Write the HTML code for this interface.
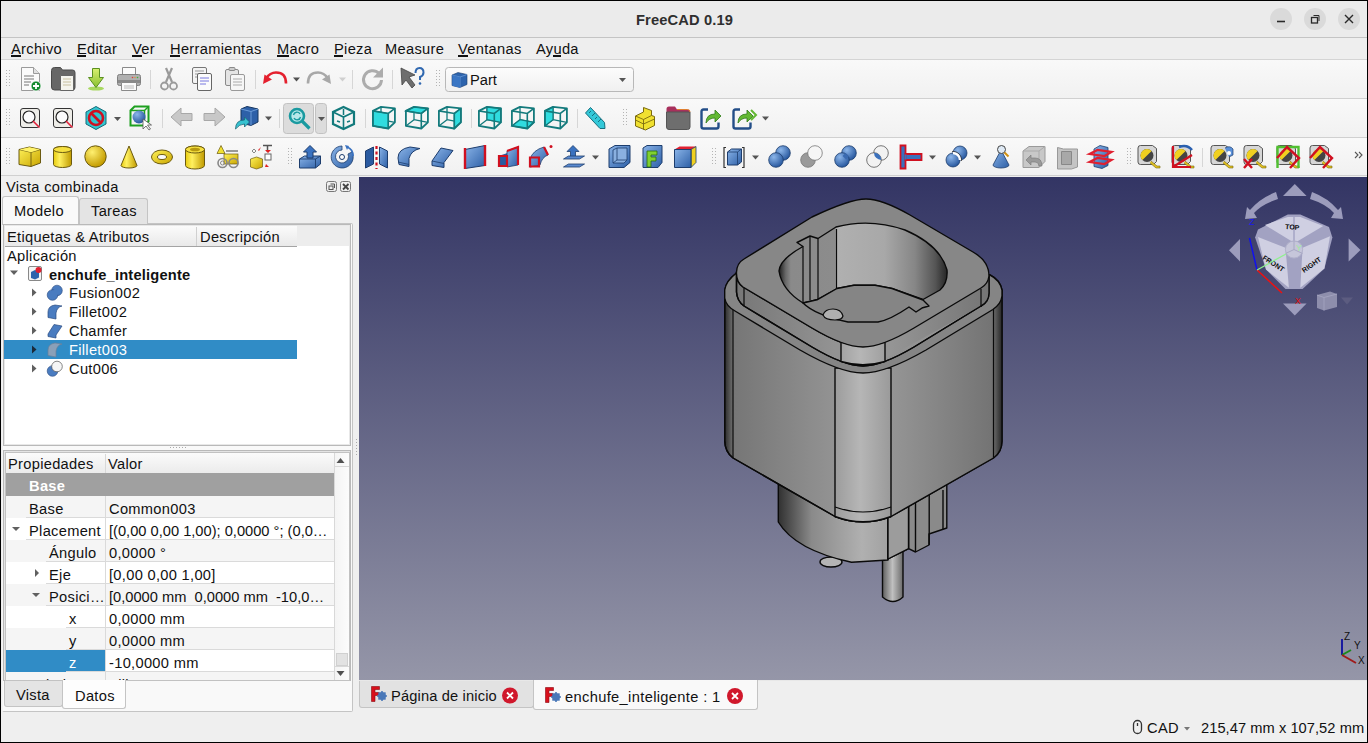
<!DOCTYPE html>
<html><head><meta charset="utf-8">
<style>
*{box-sizing:border-box;margin:0;padding:0}
html,body{width:1368px;height:743px;overflow:hidden;background:#efefef}
body{font-family:"Liberation Sans",sans-serif;font-size:14.67px;color:#111;position:relative}
.a{position:absolute}
.t{position:absolute;white-space:pre;line-height:15px;letter-spacing:0.3px}
.u{position:absolute;height:2px;background:#111}
svg{position:absolute;overflow:visible}

</style></head><body>
<div class="a" style="left:0;top:0;width:1368px;height:37px;background:#ebebeb"></div>
<div class="a" style="left:0;top:37px;width:1368px;height:1px;background:#c4c4c4"></div>
<div class="t" style="left:636px;top:13px;font-weight:bold;color:#2f2f2f;letter-spacing:0.15px">FreeCAD 0.19</div>
<div class="a" style="left:1270px;top:8px;width:22px;height:22px;border-radius:50%;background:#dadada"></div>
<div class="a" style="left:1304px;top:8px;width:22px;height:22px;border-radius:50%;background:#dadada"></div>
<div class="a" style="left:1338px;top:8px;width:22px;height:22px;border-radius:50%;background:#dadada"></div>
<svg style="left:0;top:0" width="1368" height="40">
 <path d="M1277 21.5h8" stroke="#2a2a2a" stroke-width="1.6"/>
 <rect x="1311.5" y="17.5" width="6" height="5.5" fill="none" stroke="#2a2a2a" stroke-width="1.3"/>
 <path d="M1313.5 15.5h5.5v5.5" fill="none" stroke="#2a2a2a" stroke-width="1"/>
 <path d="M1345 15l8 8M1353 15l-8 8" stroke="#2a2a2a" stroke-width="1.4"/>
</svg>
<div class="a" style="left:0;top:38px;width:1368px;height:21px;background:#eeeeee"></div>
<div class="a" style="left:0;top:59px;width:1368px;height:1px;background:#d4d4d4"></div>
<div style="letter-spacing:0.45px">
<div class="t" style="left:11px;top:42px">Archivo</div><div class="u" style="left:11px;top:55px;width:10px"></div>
<div class="t" style="left:77px;top:42px">Editar</div><div class="u" style="left:77px;top:55px;width:9px"></div>
<div class="t" style="left:132px;top:42px">Ver</div><div class="u" style="left:132px;top:55px;width:10px"></div>
<div class="t" style="left:170px;top:42px">Herramientas</div><div class="u" style="left:170px;top:55px;width:10px"></div>
<div class="t" style="left:277px;top:42px">Macro</div><div class="u" style="left:277px;top:55px;width:12px"></div>
<div class="t" style="left:334px;top:42px">Pieza</div><div class="u" style="left:334px;top:55px;width:9px"></div>
<div class="t" style="left:385px;top:42px">Measure</div>
<div class="t" style="left:458px;top:42px">Ventanas</div><div class="u" style="left:458px;top:55px;width:10px"></div>
<div class="t" style="left:536px;top:42px">Ayuda</div><div class="u" style="left:553px;top:55px;width:8px"></div>
</div>
<div class="a" style="left:0;top:60px;width:1368px;height:38px;background:linear-gradient(#f9f9f9,#f1f1f1)"></div>
<div class="a" style="left:0;top:98px;width:1368px;height:1px;background:#d0d0d0"></div>
<div class="a" style="left:0;top:99px;width:1368px;height:38px;background:linear-gradient(#f9f9f9,#f1f1f1)"></div>
<div class="a" style="left:0;top:137px;width:1368px;height:1px;background:#d0d0d0"></div>
<div class="a" style="left:0;top:138px;width:1368px;height:37px;background:linear-gradient(#f9f9f9,#f1f1f1)"></div>
<div class="a" style="left:0;top:175px;width:1368px;height:1px;background:#d0d0d0"></div>
<!-- borders -->
<div class="a" style="left:0;top:0;width:1368px;height:1px;background:#000;z-index:50"></div>
<div class="a" style="left:0;top:742px;width:1368px;height:1px;background:#000;z-index:50"></div>
<div class="a" style="left:0;top:0;width:1px;height:743px;background:#000;z-index:50"></div>
<div class="a" style="left:1367px;top:0;width:1px;height:743px;background:#000;z-index:50"></div>
<svg style="left:0;top:0;z-index:5" width="1368" height="180"><defs>
<linearGradient id="gy" x1="0" y1="0" x2="1" y2="1"><stop offset="0" stop-color="#fff35a"/><stop offset="1" stop-color="#c9a400"/></linearGradient>
<linearGradient id="gyh" x1="0" y1="0" x2="1" y2="0"><stop offset="0" stop-color="#e8cc10"/><stop offset="0.35" stop-color="#fff060"/><stop offset="1" stop-color="#c09a00"/></linearGradient>
<radialGradient id="gys" cx="0.35" cy="0.3" r="0.7"><stop offset="0" stop-color="#fff070"/><stop offset="1" stop-color="#c49c00"/></radialGradient>
<linearGradient id="gb" x1="0" y1="0" x2="1" y2="1"><stop offset="0" stop-color="#8ab4e8"/><stop offset="1" stop-color="#2d5fa6"/></linearGradient>
<radialGradient id="gbs" cx="0.35" cy="0.3" r="0.7"><stop offset="0" stop-color="#8cb6ea"/><stop offset="1" stop-color="#2a5aa0"/></radialGradient>
<linearGradient id="gg" x1="0" y1="0" x2="0" y2="1"><stop offset="0" stop-color="#d8f070"/><stop offset="1" stop-color="#88c030"/></linearGradient>
<linearGradient id="gcombo" x1="0" y1="0" x2="0" y2="1"><stop offset="0" stop-color="#fcfcfc"/><stop offset="1" stop-color="#f0f0f0"/></linearGradient></defs><rect x="6" y="70" width="1" height="1" fill="#b4b4b4"/><rect x="9" y="70" width="1" height="1" fill="#b4b4b4"/><rect x="6" y="73" width="1" height="1" fill="#b4b4b4"/><rect x="9" y="73" width="1" height="1" fill="#b4b4b4"/><rect x="6" y="76" width="1" height="1" fill="#b4b4b4"/><rect x="9" y="76" width="1" height="1" fill="#b4b4b4"/><rect x="6" y="79" width="1" height="1" fill="#b4b4b4"/><rect x="9" y="79" width="1" height="1" fill="#b4b4b4"/><rect x="6" y="82" width="1" height="1" fill="#b4b4b4"/><rect x="9" y="82" width="1" height="1" fill="#b4b4b4"/><rect x="6" y="85" width="1" height="1" fill="#b4b4b4"/><rect x="9" y="85" width="1" height="1" fill="#b4b4b4"/><g transform="translate(19,67)"><path d="M2.5 0.5h12l6 6v17h-18z" fill="#fafafa" stroke="#9a9a9a"/><path d="M14.5 0.5v6h6" fill="#e0e0e0" stroke="#9a9a9a"/><path d="M5 9h10M5 12h10M5 15h7M5 18h5" stroke="#777" stroke-width="1"/><circle cx="17" cy="19" r="5" fill="#138a2e" stroke="#fff" stroke-width="0.8"/><path d="M14 19h6M17 16v6" stroke="#fff" stroke-width="1.8"/></g><g transform="translate(51,67)"><path d="M0.5 3.5q0-3 3-3h6l2 2.5h10q2.5 0 2.5 2.5v15q0 2.5-2.5 2.5h-18q-3 0-3-3z" fill="#676767" stroke="#4a4a4a"/><path d="M9.5 8.5h13v15h-13z" fill="#f4f4ee" stroke="#666"/><path d="M12 12h8M12 15h8M12 18h8" stroke="#c8c0a0"/></g><g transform="translate(88,67)"><ellipse cx="8" cy="21.5" rx="8" ry="2" fill="#a8d860"/><path d="M4.5 1.5h7v9h4l-7.5 10l-7.5-10h4z" fill="url(#gg)" stroke="#5a9020"/></g><g transform="translate(117,67)"><path d="M5.5 0.5h13v7h-13z" fill="#fbfbfb" stroke="#8a8a8a"/><rect x="0.5" y="7.5" width="23" height="11" rx="2" fill="#b0b0b0" stroke="#808080"/><rect x="1" y="13" width="22" height="3" fill="#8a8a8a"/><path d="M4.5 15.5h15v8h-15z" fill="#fbfbfb" stroke="#8a8a8a"/><path d="M7 19h10M7 21h10" stroke="#bbb"/><circle cx="15.5" cy="10.5" r="0.8" fill="#e04040"/><circle cx="18" cy="10.5" r="0.8" fill="#e09040"/><circle cx="20.5" cy="10.5" r="0.8" fill="#40b040"/></g><rect x="150" y="70" width="1" height="19" fill="#d6d6d6"/><g transform="translate(160,67)"><path d="M6 1l6 14M12 1l-6 14" stroke="#9a9a9a" stroke-width="2.2"/><circle cx="4.5" cy="19" r="3.5" fill="none" stroke="#9a9a9a" stroke-width="1.8"/><circle cx="13.5" cy="19" r="3.5" fill="none" stroke="#9a9a9a" stroke-width="1.8"/></g><g transform="translate(192,67)"><rect x="0.5" y="0.5" width="14" height="16" rx="1.5" fill="#f4f4f4" stroke="#777"/><path d="M3 4h9M3 7h9M3 10h9" stroke="#999"/><rect x="5.5" y="6.5" width="14" height="17" rx="1.5" fill="#fbfbfb" stroke="#666"/><path d="M8 11h9M8 14h9M8 17h6" stroke="#7878e0"/></g><g transform="translate(225,67)"><rect x="0.5" y="2.5" width="13" height="16" rx="1.5" fill="#e4e4e4" stroke="#8a8a8a"/><rect x="4" y="0.5" width="6" height="3" rx="1" fill="#ccc" stroke="#8a8a8a"/><rect x="5.5" y="7.5" width="14" height="16" rx="1.5" fill="#f6f6f6" stroke="#999"/><path d="M8 12h9M8 15h9M8 18h9" stroke="#aaa"/></g><rect x="255" y="70" width="1" height="19" fill="#d6d6d6"/><g transform="translate(263,67)"><path d="M23 16.5q0-11-10-11q-6 0-10 6" fill="none" stroke="#e4202e" stroke-width="2.6"/><path d="M0 17l1.5-9.5l7.5 5z" fill="#e4202e"/></g><path d="M293 77.5h7l-3.5 4z" fill="#505050"/><g transform="translate(307,67)"><path d="M1 16.5q0-11 10-11q6 0 10 6" fill="none" stroke="#a8a8a8" stroke-width="2.6"/><path d="M24 17l-1.5-9.5l-7.5 5z" fill="#a8a8a8"/></g><path d="M339 77.5h7l-3.5 4z" fill="#cfcfcf"/><rect x="352" y="70" width="1" height="19" fill="#d6d6d6"/><g transform="translate(360,67)"><path d="M19 6.5a9 9 0 1 0 2.5 6.5" fill="none" stroke="#acacac" stroke-width="3"/><path d="M23 0.5v10h-10z" fill="#acacac"/></g><rect x="392" y="70" width="1" height="19" fill="#d6d6d6"/><g transform="translate(400,67)"><path d="M1 1l14 7l-6 2l6 8l-3 3l-6-8l-4 5z" fill="#6e6e6e" stroke="#444" stroke-width="0.8"/><path d="M15.5 6q0-5 4-5t4 4.5q0 3-3.5 4.5v3" fill="none" stroke="#3068b0" stroke-width="2"/><circle cx="20" cy="16.5" r="1.3" fill="#3068b0"/></g><rect x="436" y="70" width="1" height="1" fill="#b4b4b4"/><rect x="439" y="70" width="1" height="1" fill="#b4b4b4"/><rect x="436" y="73" width="1" height="1" fill="#b4b4b4"/><rect x="439" y="73" width="1" height="1" fill="#b4b4b4"/><rect x="436" y="76" width="1" height="1" fill="#b4b4b4"/><rect x="439" y="76" width="1" height="1" fill="#b4b4b4"/><rect x="436" y="79" width="1" height="1" fill="#b4b4b4"/><rect x="439" y="79" width="1" height="1" fill="#b4b4b4"/><rect x="436" y="82" width="1" height="1" fill="#b4b4b4"/><rect x="439" y="82" width="1" height="1" fill="#b4b4b4"/><rect x="436" y="85" width="1" height="1" fill="#b4b4b4"/><rect x="439" y="85" width="1" height="1" fill="#b4b4b4"/><rect x="445.5" y="67.5" width="188" height="24" rx="3" fill="url(#gcombo)" stroke="#b8b8b8"/><g transform="translate(451,72)"><path d="M1 3l6-2.5l9 2l0 10l-7 3l-8-2z" fill="#2d64ad" stroke="#1d3d6d" stroke-width="0.6"/><path d="M1 3l8 2l7-2.5M9 5v11" stroke="#6a9ad8" stroke-width="0.8" fill="none"/><path d="M1.3 3.3l7.7 1.9v10.5l-7.7-2z" fill="#3a76c4"/></g><text x="470" y="85" font-size="14.67" fill="#111" style="font-family:Liberation Sans">Part</text><path d="M619 78h7l-3.5 4z" fill="#555"/><rect x="6" y="109" width="1" height="1" fill="#b4b4b4"/><rect x="9" y="109" width="1" height="1" fill="#b4b4b4"/><rect x="6" y="112" width="1" height="1" fill="#b4b4b4"/><rect x="9" y="112" width="1" height="1" fill="#b4b4b4"/><rect x="6" y="115" width="1" height="1" fill="#b4b4b4"/><rect x="9" y="115" width="1" height="1" fill="#b4b4b4"/><rect x="6" y="118" width="1" height="1" fill="#b4b4b4"/><rect x="9" y="118" width="1" height="1" fill="#b4b4b4"/><rect x="6" y="121" width="1" height="1" fill="#b4b4b4"/><rect x="9" y="121" width="1" height="1" fill="#b4b4b4"/><rect x="6" y="124" width="1" height="1" fill="#b4b4b4"/><rect x="9" y="124" width="1" height="1" fill="#b4b4b4"/><g transform="translate(20,108)"><rect x="0.5" y="0.5" width="19" height="19" rx="2.5" fill="#eeede8" stroke="#333" stroke-width="1"/><circle cx="9" cy="9" r="6" fill="#fbfbfb" stroke="#222" stroke-width="1.2"/><path d="M13 13l6.5 6.5" stroke="#e0203a" stroke-width="1.6"/></g><g transform="translate(53,108)"><rect x="0.5" y="0.5" width="19" height="19" rx="2.5" fill="#eeede8" stroke="#333" stroke-width="1"/><circle cx="9" cy="9" r="6" fill="#fbfbfb" stroke="#222" stroke-width="1.2"/><path d="M13 13l6.5 6.5" stroke="#e0203a" stroke-width="1.6"/></g><g transform="translate(85,106)"><path d="M11 0.5l10 5.5v12l-10 5.5l-10-5.5v-12z" fill="#31c6d0" stroke="#156a78"/><circle cx="11" cy="12" r="7" fill="none" stroke="#d01020" stroke-width="2.6"/><path d="M6 7l10 10" stroke="#d01020" stroke-width="2.6"/></g><path d="M114 117h7l-3.5 4z" fill="#555"/><g transform="translate(129,106)"><path d="M1.5 4.5l4-4h14v15l-4 4h-14z" fill="none" stroke="#1ea020" stroke-width="2"/><path d="M1.5 4.5h14v15M15.5 4.5l4-4" fill="none" stroke="#1ea020" stroke-width="1.5"/><circle cx="10" cy="11" r="6.5" fill="url(#gbs)"/><path d="M14 13l0 10l3-3l3 4l1.5-1l-3-4h4z" fill="#fff" stroke="#555" stroke-width="0.8"/></g><rect x="162" y="109" width="1" height="19" fill="#d6d6d6"/><g transform="translate(170,106)"><path d="M1 11l10-9v5.5h11v7h-11v5.5z" fill="#c8c8c8" stroke="#a8a8a8"/></g><g transform="translate(203,106)"><path d="M22 11l-10-9v5.5h-11v7h11v5.5z" fill="#c8c8c8" stroke="#a8a8a8"/></g><g transform="translate(235,106)"><path d="M6 3l6-2.5l11 2.5v13l-7 3.5l-10-2.5z" fill="#2d60a8" stroke="#17365f"/><path d="M6 3l10 2.5l7-2.5M16 5.5v14" fill="none" stroke="#6b9bd8"/><path d="M0.5 23q0-9 9-9v-3l5 5l-5 5v-3q-5 0-9 5z" fill="#36c2d0" stroke="#1a6a7a" stroke-width="0.8"/></g><path d="M265 116.5h7l-3.5 4z" fill="#555"/><rect x="279" y="109" width="1" height="19" fill="#d6d6d6"/><rect x="283.5" y="103.5" width="30" height="30" rx="3" fill="#dcdcdc" stroke="#c2c2c2"/><rect x="315.5" y="103.5" width="11" height="30" rx="3" fill="#dcdcdc" stroke="#c2c2c2"/><g transform="translate(288,107)"><circle cx="9" cy="9" r="7" fill="#b8e8ea" stroke="#1a9aa0" stroke-width="2.6"/><path d="M14 14l7.5 7.5" stroke="#1a9aa0" stroke-width="3.2"/><path d="M5.5 8a3.5 3.5 0 0 1 6.5-1M12.5 10a3.5 3.5 0 0 1-6.5 1" fill="none" stroke="#1a9aa0" stroke-width="1.4"/></g><path d="M318 117h7l-3.5 4z" fill="#555"/><g transform="translate(332,106)"><path d="M11.5 1l10.5 5v12l-10.5 5l-10.5-5v-12z" fill="none" stroke="#137a7c" stroke-width="2.2"/><path d="M1 6l10.5 5l10.5-5M11.5 11v12" fill="none" stroke="#137a7c" stroke-width="1.6"/><path d="M11.5 3v6M5 15l3 1M15 16l3-1" stroke="#137a7c" stroke-width="1.5"/></g><rect x="365" y="109" width="1" height="19" fill="#d6d6d6"/><g transform="translate(370,104)"><path d="M11 2.9V15.7M11 15.7L24.9 18.3M11 15.7L2.9 21.9" stroke="#137a7c" stroke-width="1.3" fill="none"/><polygon points="2.9,6.9 18.3,9.5 18.3,24.5 2.9,21.9" fill="#30dcdf" stroke="#137a7c" stroke-width="1.2"/><polygon points="2.9,6.9 11,2.9 24.9,4.4 24.9,18.3 18.3,24.5 2.9,21.9" fill="none" stroke="#137a7c" stroke-width="1.8" stroke-linejoin="round"/><path d="M2.9 6.9L18.3 9.5L24.9 4.4M18.3 9.5V24.5" stroke="#137a7c" stroke-width="1.6" fill="none"/></g><g transform="translate(403,104)"><path d="M11 2.9V15.7M11 15.7L24.9 18.3M11 15.7L2.9 21.9" stroke="#137a7c" stroke-width="1.3" fill="none"/><polygon points="2.9,6.9 11,2.9 24.9,4.4 18.3,9.5" fill="#30dcdf" stroke="#137a7c" stroke-width="1.2"/><polygon points="2.9,6.9 11,2.9 24.9,4.4 24.9,18.3 18.3,24.5 2.9,21.9" fill="none" stroke="#137a7c" stroke-width="1.8" stroke-linejoin="round"/><path d="M2.9 6.9L18.3 9.5L24.9 4.4M18.3 9.5V24.5" stroke="#137a7c" stroke-width="1.6" fill="none"/></g><g transform="translate(436,104)"><path d="M11 2.9V15.7M11 15.7L24.9 18.3M11 15.7L2.9 21.9" stroke="#137a7c" stroke-width="1.3" fill="none"/><polygon points="18.3,9.5 24.9,4.4 24.9,18.3 18.3,24.5" fill="#30dcdf" stroke="#137a7c" stroke-width="1.2"/><polygon points="2.9,6.9 11,2.9 24.9,4.4 24.9,18.3 18.3,24.5 2.9,21.9" fill="none" stroke="#137a7c" stroke-width="1.8" stroke-linejoin="round"/><path d="M2.9 6.9L18.3 9.5L24.9 4.4M18.3 9.5V24.5" stroke="#137a7c" stroke-width="1.6" fill="none"/></g><rect x="471" y="109" width="1" height="19" fill="#d6d6d6"/><g transform="translate(476,104)"><path d="M11 2.9V15.7M11 15.7L24.9 18.3M11 15.7L2.9 21.9" stroke="#137a7c" stroke-width="1.3" fill="none"/><polygon points="11,2.9 24.9,4.4 24.9,18.3 11,15.7" fill="#30dcdf" stroke="#137a7c" stroke-width="1.2"/><polygon points="2.9,6.9 11,2.9 24.9,4.4 24.9,18.3 18.3,24.5 2.9,21.9" fill="none" stroke="#137a7c" stroke-width="1.8" stroke-linejoin="round"/><path d="M2.9 6.9L18.3 9.5L24.9 4.4M18.3 9.5V24.5" stroke="#137a7c" stroke-width="1.6" fill="none"/></g><g transform="translate(509,104)"><path d="M11 2.9V15.7M11 15.7L24.9 18.3M11 15.7L2.9 21.9" stroke="#137a7c" stroke-width="1.3" fill="none"/><polygon points="2.9,21.9 11,15.7 24.9,18.3 18.3,24.5" fill="#30dcdf" stroke="#137a7c" stroke-width="1.2"/><polygon points="2.9,6.9 11,2.9 24.9,4.4 24.9,18.3 18.3,24.5 2.9,21.9" fill="none" stroke="#137a7c" stroke-width="1.8" stroke-linejoin="round"/><path d="M2.9 6.9L18.3 9.5L24.9 4.4M18.3 9.5V24.5" stroke="#137a7c" stroke-width="1.6" fill="none"/></g><g transform="translate(542,104)"><path d="M11 2.9V15.7M11 15.7L24.9 18.3M11 15.7L2.9 21.9" stroke="#137a7c" stroke-width="1.3" fill="none"/><polygon points="2.9,6.9 11,2.9 11,15.7 2.9,21.9" fill="#30dcdf" stroke="#137a7c" stroke-width="1.2"/><polygon points="2.9,6.9 11,2.9 24.9,4.4 24.9,18.3 18.3,24.5 2.9,21.9" fill="none" stroke="#137a7c" stroke-width="1.8" stroke-linejoin="round"/><path d="M2.9 6.9L18.3 9.5L24.9 4.4M18.3 9.5V24.5" stroke="#137a7c" stroke-width="1.6" fill="none"/></g><rect x="577" y="109" width="1" height="19" fill="#d6d6d6"/><g transform="translate(585,107)"><path d="M0.5 6l5-5.5l14 15l0.5 6l-5 0z" fill="#33c8d8" stroke="#167080"/><path d="M4 6l2-2M7 9l3-3M10 12l2-2M13 15l3-3" stroke="#167080"/></g><rect x="623" y="109" width="1" height="1" fill="#b4b4b4"/><rect x="626" y="109" width="1" height="1" fill="#b4b4b4"/><rect x="623" y="112" width="1" height="1" fill="#b4b4b4"/><rect x="626" y="112" width="1" height="1" fill="#b4b4b4"/><rect x="623" y="115" width="1" height="1" fill="#b4b4b4"/><rect x="626" y="115" width="1" height="1" fill="#b4b4b4"/><rect x="623" y="118" width="1" height="1" fill="#b4b4b4"/><rect x="626" y="118" width="1" height="1" fill="#b4b4b4"/><rect x="623" y="121" width="1" height="1" fill="#b4b4b4"/><rect x="626" y="121" width="1" height="1" fill="#b4b4b4"/><rect x="623" y="124" width="1" height="1" fill="#b4b4b4"/><rect x="626" y="124" width="1" height="1" fill="#b4b4b4"/><g transform="translate(635,107)"><path d="M0.5 9l8-4v-4.5l8 3v5l3 1v9l-9 4.5l-10-4z" fill="#f0e030" stroke="#7a6a10"/><path d="M0.5 9l8 3.5l8-4M8.5 12.5v10M0.5 13l8 4l11-5" fill="none" stroke="#7a6a10" stroke-width="0.9"/></g><g transform="translate(666,106)"><path d="M0.5 3q0-2.5 2.5-2.5h6l2 3h10.5q2.5 0 2.5 2.5v2h-23.5z" fill="#a8305c"/><path d="M0.5 6h23.5v15q0 2.5-2.5 2.5h-18.5q-2.5 0-2.5-2.5z" fill="#6e6e6e" stroke="#555"/><path d="M11 3.5h10.5q2.5 0 2.5 2.5" stroke="#e08030" fill="none"/></g><g transform="translate(701,107)"><path d="M7 2.5h-4.5q-2 0-2 2v15q0 2 2 2h13q2 0 2-2v-4" fill="none" stroke="#234e88" stroke-width="2.4"/><path d="M5 16q0-9 9-9v-4l6 6l-6 6v-4q-6 0-9 5z" fill="#62b832" stroke="#2e7a18" stroke-width="0.8"/></g><g transform="translate(733,107)"><path d="M7 2.5h-4.5q-2 0-2 2v15q0 2 2 2h13q2 0 2-2v-4" fill="none" stroke="#234e88" stroke-width="2.4"/><path d="M5 16q0-9 9-9v-4l6 6l-6 6v-4q-6 0-9 5z" fill="#62b832" stroke="#2e7a18" stroke-width="0.8"/><path d="M18 3l5 5l-5 5" fill="none" stroke="#62b832" stroke-width="2"/></g><path d="M762 116.5h7l-3.5 4z" fill="#555"/><rect x="6" y="148" width="1" height="1" fill="#b4b4b4"/><rect x="9" y="148" width="1" height="1" fill="#b4b4b4"/><rect x="6" y="151" width="1" height="1" fill="#b4b4b4"/><rect x="9" y="151" width="1" height="1" fill="#b4b4b4"/><rect x="6" y="154" width="1" height="1" fill="#b4b4b4"/><rect x="9" y="154" width="1" height="1" fill="#b4b4b4"/><rect x="6" y="157" width="1" height="1" fill="#b4b4b4"/><rect x="9" y="157" width="1" height="1" fill="#b4b4b4"/><rect x="6" y="160" width="1" height="1" fill="#b4b4b4"/><rect x="9" y="160" width="1" height="1" fill="#b4b4b4"/><rect x="6" y="163" width="1" height="1" fill="#b4b4b4"/><rect x="9" y="163" width="1" height="1" fill="#b4b4b4"/><g transform="translate(18,146)"><path d="M1 3.5l10.5-2.5l11 2.5v13.5l-9.5 3.5l-12-2z" fill="url(#gy)" stroke="#6b5a10"/><path d="M1 3.5l12 2.8l9.5-2.8M13 6.3v14" fill="none" stroke="#6b5a10" stroke-width="0.9"/><path d="M1.5 3.6l10-2.3l10.5 2.3l-9 2.6z" fill="#fff36a"/></g><g transform="translate(53,146)"><path d="M0.5 3.5a9 3 0 0 1 18 0v15a9 3 0 0 1-18 0z" fill="url(#gyh)" stroke="#6b5a10"/><ellipse cx="9.5" cy="3.5" rx="9" ry="3" fill="#f6e040" stroke="#6b5a10"/></g><g transform="translate(84,145)"><circle cx="11.5" cy="11.5" r="10.7" fill="url(#gys)" stroke="#6b5a10"/></g><g transform="translate(121,145)"><path d="M8 1l8 19.5a8 2.5 0 0 1-16 0z" fill="url(#gyh)" stroke="#6b5a10"/></g><g transform="translate(151,149)"><ellipse cx="11" cy="8" rx="10.5" ry="7" fill="url(#gy)" stroke="#6b5a10"/><ellipse cx="11" cy="8" rx="4.5" ry="2.5" fill="#fbfbfb" stroke="#6b5a10"/></g><g transform="translate(185,145)"><path d="M0.5 4.5a9.5 3.5 0 0 1 19 0v16a9.5 3.5 0 0 1-19 0z" fill="url(#gyh)" stroke="#6b5a10"/><ellipse cx="10" cy="4.5" rx="9.5" ry="3.5" fill="#f6e040" stroke="#6b5a10"/><ellipse cx="10" cy="4.5" rx="5" ry="1.8" fill="#b89a10"/></g><g transform="translate(217,145)"><path d="M4 0.5l4 8h-8z" fill="#f0e030" stroke="#6b5a10" stroke-width="0.7"/><path d="M9 6h12" stroke="#999" stroke-width="2"/><rect x="7" y="9" width="14" height="10" fill="url(#gy)" stroke="#6b5a10" stroke-width="0.7"/><circle cx="5.5" cy="18" r="4.5" fill="none" stroke="#888" stroke-width="1.6"/><circle cx="5.5" cy="18" r="2" fill="none" stroke="#888" stroke-width="1"/><circle cx="16.5" cy="18" r="4.5" fill="none" stroke="#888" stroke-width="1.6"/></g><g transform="translate(250,145)"><path d="M0.5 14l6-2l6 2v8l-6 2l-6-2z" fill="url(#gy)" stroke="#6b5a10" stroke-width="0.7"/><path d="M13 0.5h9M17.5 1v6" stroke="#555" stroke-width="1.5"/><rect x="15" y="9" width="6" height="6" fill="#fff" stroke="#666"/><path d="M15 5l3 3l3-3z M11 2l-3 3l1 1z M16 19l3 3l-4 0z" fill="#e02020"/><path d="M2 6l2-2l2 2l-2 2z" fill="none" stroke="#888"/></g><rect x="288" y="148" width="1" height="1" fill="#b4b4b4"/><rect x="291" y="148" width="1" height="1" fill="#b4b4b4"/><rect x="288" y="151" width="1" height="1" fill="#b4b4b4"/><rect x="291" y="151" width="1" height="1" fill="#b4b4b4"/><rect x="288" y="154" width="1" height="1" fill="#b4b4b4"/><rect x="291" y="154" width="1" height="1" fill="#b4b4b4"/><rect x="288" y="157" width="1" height="1" fill="#b4b4b4"/><rect x="291" y="157" width="1" height="1" fill="#b4b4b4"/><rect x="288" y="160" width="1" height="1" fill="#b4b4b4"/><rect x="291" y="160" width="1" height="1" fill="#b4b4b4"/><rect x="288" y="163" width="1" height="1" fill="#b4b4b4"/><rect x="291" y="163" width="1" height="1" fill="#b4b4b4"/><g transform="translate(299,145)"><path d="M0.5 14l5-3h16v8l-5 4h-16z" fill="url(#gb)" stroke="#1d3d6d"/><path d="M0.5 14h16v9M16.5 14l5-3" fill="none" stroke="#1d3d6d" stroke-width="0.9"/><path d="M11 0.5l6.5 6.5h-3.5v6h-6v-6h-3.5z" fill="#3a72c0" stroke="#1d3d6d"/></g><g transform="translate(331,145)"><path d="M11 1a11 11 0 1 0 10 6l-4 2a6.5 6.5 0 1 1-6-4z" fill="url(#gb)" stroke="#1d3d6d" stroke-width="0.8"/><circle cx="11" cy="12" r="2.5" fill="#fff" stroke="#1d3d6d"/><path d="M16 2q6 2 6 9" fill="none" stroke="#3a72c0" stroke-width="1.8"/><path d="M14 0l4 1l-2 4z" fill="#3a72c0"/></g><g transform="translate(365,146)"><path d="M0.5 5l8-4v17l-8 4z" fill="#2a5aa0" stroke="#1d3d6d"/><path d="M14.5 1l8 4v17l-8-4z" fill="url(#gb)" stroke="#1d3d6d"/><path d="M11.5 0v23" stroke="#d01020" stroke-width="2.2" stroke-dasharray="3 2.5"/></g><g transform="translate(397,146)"><path d="M1 12q0-9 12-11l10 1.5q-9 2-11 10v8l-10-2z" fill="url(#gb)" stroke="#1d3d6d"/><path d="M1 16l11 2.5" stroke="#1d3d6d" stroke-width="0.8"/></g><g transform="translate(431,146)"><path d="M1 15l9-13l12 2.5l-9 12v5l-12-2z" fill="url(#gb)" stroke="#1d3d6d"/><path d="M1 15l12 2.5" stroke="#1d3d6d" stroke-width="0.8"/></g><g transform="translate(463,145)"><path d="M2 4.5l20-4v20l-20 3z" fill="url(#gb)" stroke="#1d3d6d"/><path d="M2 3v21M22 0v21" stroke="#d01020" stroke-width="2.4"/></g><g transform="translate(498,146)"><path d="M0.5 10l9-3v13l-9-1z" fill="#2a5aa0"/><path d="M9 5l11-4v18l-11 2z" fill="url(#gb)" stroke="#1d3d6d" stroke-width="0.8"/><path d="M1 10h8v10h-8z" fill="none" stroke="#d01020" stroke-width="2.2"/><path d="M9 5l11-4v18" fill="none" stroke="#d01020" stroke-width="2.2"/></g><g transform="translate(529,145)"><path d="M1 14q3-9 14-12l4 8q-6 2-8 10l-10 2z" fill="url(#gb)" stroke="#1d3d6d" stroke-width="0.8"/><path d="M1 12.5h9v9h-9z" fill="none" stroke="#d01020" stroke-width="2.2"/><path d="M15 2l4 8" stroke="#d01020" stroke-width="2.2"/><circle cx="22" cy="1.5" r="1.5" fill="#d01020"/></g><g transform="translate(563,145)"><path d="M10 0.5l6 6h-3.5v5h-5v-5h-3.5z" fill="#3a72c0" stroke="#1d3d6d" stroke-width="0.8"/><path d="M0.5 14l5-3h16l-5 3z" fill="#5a8ad0" stroke="#1d3d6d" stroke-width="0.8"/><path d="M0.5 22l5-3h16l-5 3z" fill="#5a8ad0" stroke="#1d3d6d" stroke-width="0.8"/></g><path d="M592 155.5h7l-3.5 4z" fill="#555"/><g transform="translate(608,145)"><path d="M1 4l6-3.5h15v17l-6 5h-15z" fill="url(#gb)" stroke="#1d3d6d"/><path d="M5 5l4-2h10v12l-3 3h-11z" fill="#8ab0e0" stroke="#1d3d6d" stroke-width="0.8"/><path d="M9 3v12h10M9 15l-4 3" fill="none" stroke="#1d3d6d" stroke-width="0.8"/></g><g transform="translate(642,145)"><path d="M1 3l4-2.5h15v17l-4 5h-15z" fill="url(#gb)" stroke="#1d3d6d"/><path d="M5 6h10v4h-6v2h5v4h-5v6h-4z" fill="#80d030" stroke="#2a6a10" stroke-width="0.8"/></g><g transform="translate(674,146)"><path d="M0.5 3.5l5-3h16.5l-5 3z" fill="#e02030"/><path d="M17 3.5l5-3v16l-5 5z" fill="#f0d020" stroke="#1d3d6d" stroke-width="0.8"/><path d="M0.5 3.5h16.5v18h-16.5z" fill="url(#gb)" stroke="#1d3d6d"/></g><rect x="712" y="148" width="1" height="1" fill="#b4b4b4"/><rect x="715" y="148" width="1" height="1" fill="#b4b4b4"/><rect x="712" y="151" width="1" height="1" fill="#b4b4b4"/><rect x="715" y="151" width="1" height="1" fill="#b4b4b4"/><rect x="712" y="154" width="1" height="1" fill="#b4b4b4"/><rect x="715" y="154" width="1" height="1" fill="#b4b4b4"/><rect x="712" y="157" width="1" height="1" fill="#b4b4b4"/><rect x="715" y="157" width="1" height="1" fill="#b4b4b4"/><rect x="712" y="160" width="1" height="1" fill="#b4b4b4"/><rect x="715" y="160" width="1" height="1" fill="#b4b4b4"/><rect x="712" y="163" width="1" height="1" fill="#b4b4b4"/><rect x="715" y="163" width="1" height="1" fill="#b4b4b4"/><g transform="translate(723,145)"><path d="M3 2.5h-2v20h2M19 2.5h2v20h-2" fill="none" stroke="#333" stroke-width="1.2"/><path d="M4.5 7l4-3h10v13l-4 3h-10z" fill="url(#gb)" stroke="#1d3d6d"/><path d="M4.5 7h10v13M14.5 7l4-3" fill="none" stroke="#1d3d6d" stroke-width="0.8"/></g><path d="M752 155.5h7l-3.5 4z" fill="#555"/><g transform="translate(768,145)"><circle cx="15" cy="8" r="7.3" fill="url(#gbs)" stroke="#1d3d6d" stroke-width="0.8"/><circle cx="8" cy="15" r="7.3" fill="url(#gbs)" stroke="#1d3d6d" stroke-width="0.8"/></g><g transform="translate(800,145)"><circle cx="8" cy="15" r="7.3" fill="#9a9a9a" stroke="#777" stroke-width="0.8"/><circle cx="15" cy="8" r="7.3" fill="#f6f6f6" stroke="#777" stroke-width="0.8"/></g><g transform="translate(834,145)"><circle cx="15" cy="8" r="7.3" fill="url(#gbs)" stroke="#1d3d6d" stroke-width="0.8"/><circle cx="8" cy="15" r="7.3" fill="url(#gbs)" stroke="#1d3d6d" stroke-width="0.8"/><path d="M10 9.5l3.5 3.5" stroke="#3a6ab0" stroke-width="4"/></g><g transform="translate(866,145)"><circle cx="15" cy="8" r="7.3" fill="#f2f2f2" stroke="#555" stroke-width="0.8"/><circle cx="8" cy="15" r="7.3" fill="#f2f2f2" stroke="#555" stroke-width="0.8"/><path d="M8 7.7a7.3 7.3 0 0 1 7.3 7.3a7.3 7.3 0 0 1-7.3-7.3z" fill="#3a70bc"/></g><g transform="translate(899,145)"><path d="M1.5 0.5h5v23h-5z" fill="#3a70bc" stroke="#d01020" stroke-width="1.8"/><path d="M6.5 9h16v6h-16z" fill="#3a70bc" stroke="#d01020" stroke-width="1.8"/><path d="M6.5 9.5v5" stroke="#3a70bc" stroke-width="2"/></g><path d="M929 155.5h7l-3.5 4z" fill="#555"/><g transform="translate(945,145)"><circle cx="15" cy="8" r="7" fill="url(#gbs)" stroke="#1d3d6d" stroke-width="0.8"/><circle cx="8" cy="15" r="7" fill="url(#gbs)" stroke="#1d3d6d" stroke-width="0.8"/><path d="M8 8a7 7 0 0 1 7 7" fill="none" stroke="#fff" stroke-width="2.5"/><path d="M7 6.5a8.5 8.5 0 0 1 9.5 9.5" fill="none" stroke="#333" stroke-width="0.8"/></g><path d="M974 155.5h7l-3.5 4z" fill="#555"/><g transform="translate(993,145)"><path d="M8 5l8 15a8 3 0 0 1-16 0z" fill="url(#gb)" stroke="#1d3d6d" stroke-width="0.8"/><circle cx="8.5" cy="4.5" r="4" fill="#dfeaf5" stroke="#444"/><path d="M11.5 7.5l4 4" stroke="#d09010" stroke-width="2"/></g><g transform="translate(1022,146)"><path d="M1 5l6-4.5h16v15l-6 6h-16z" fill="#c8c8c8" stroke="#9a9a9a"/><path d="M1 5h16v16.5M17 5l6-4.5" fill="none" stroke="#aaa"/><path d="M20 20q0-8-7-8h-4v-3l-5 5l5 5v-3h4q4 0 4 4z" fill="#9a9a9a" stroke="#777" stroke-width="0.6"/></g><g transform="translate(1057,146)"><path d="M0.5 1.5l6 1.5h14v18l-6 2h-14z" fill="#c4c4c4" stroke="#999"/><path d="M4.5 5.5h10v13h-10z" fill="#a8a8a8" stroke="#888"/></g><g transform="translate(1089,145)"><path d="M5 4l6-3.5l8 2v18l-6 3l-8-2z" fill="url(#gb)" stroke="#1d3d6d" stroke-width="0.8"/><path d="M0.5 9l8-4l14 2l-7 4z M0.5 17l8-4l14 2l-7 4z" fill="none" stroke="#e02030" stroke-width="2.2"/></g><rect x="1127" y="148" width="1" height="1" fill="#b4b4b4"/><rect x="1130" y="148" width="1" height="1" fill="#b4b4b4"/><rect x="1127" y="151" width="1" height="1" fill="#b4b4b4"/><rect x="1130" y="151" width="1" height="1" fill="#b4b4b4"/><rect x="1127" y="154" width="1" height="1" fill="#b4b4b4"/><rect x="1130" y="154" width="1" height="1" fill="#b4b4b4"/><rect x="1127" y="157" width="1" height="1" fill="#b4b4b4"/><rect x="1130" y="157" width="1" height="1" fill="#b4b4b4"/><rect x="1127" y="160" width="1" height="1" fill="#b4b4b4"/><rect x="1130" y="160" width="1" height="1" fill="#b4b4b4"/><rect x="1127" y="163" width="1" height="1" fill="#b4b4b4"/><rect x="1130" y="163" width="1" height="1" fill="#b4b4b4"/><g transform="translate(1137,145)"><path d="M1 3q0-2.5 2.5-2.5h12l4 3v13l-3 3h-13q-2.5 0-2.5-2.5z" fill="#d6d6d6" stroke="#555"/><circle cx="10" cy="10.5" r="6.5" fill="#444"/><path d="M5.4 15.1a6.5 6.5 0 0 1 9.2-9.2z" fill="#f0d020"/><path d="M14 16l6 5h3v2h-4l-6-5" fill="#e0c020" stroke="#7a6a10" stroke-width="0.6"/></g><g transform="translate(1171,145)"><path d="M1 3q0-2.5 2.5-2.5h12l4 3v13l-3 3h-13q-2.5 0-2.5-2.5z" fill="#d6d6d6" stroke="#555"/><circle cx="10" cy="10.5" r="6.5" fill="#444"/><path d="M5.4 15.1a6.5 6.5 0 0 1 9.2-9.2z" fill="#f0d020"/><path d="M14 16l6 5h3v2h-4l-6-5" fill="#e0c020" stroke="#7a6a10" stroke-width="0.6"/><path d="M2 1v21h18M2 22l19-12" fill="none" stroke="#d01020" stroke-width="2.2"/><path d="M8 2q8-3 13 3" stroke="#2a60b0" stroke-width="2.5" fill="none"/></g><rect x="1202" y="148" width="1" height="19" fill="#d6d6d6"/><g transform="translate(1210,145)"><path d="M1 3q0-2.5 2.5-2.5h12l4 3v13l-3 3h-13q-2.5 0-2.5-2.5z" fill="#d6d6d6" stroke="#555"/><circle cx="10" cy="10.5" r="6.5" fill="#444"/><path d="M5.4 15.1a6.5 6.5 0 0 1 9.2-9.2z" fill="#f0d020"/><path d="M14 16l6 5h3v2h-4l-6-5" fill="#e0c020" stroke="#7a6a10" stroke-width="0.6"/><path d="M15 3q5-3 8 1v6l-4 2" fill="#5a90d8" stroke="#1d3d6d" stroke-width="0.7"/><circle cx="19" cy="8" r="2" fill="#fff"/></g><g transform="translate(1243,145)"><path d="M1 3q0-2.5 2.5-2.5h12l4 3v13l-3 3h-13q-2.5 0-2.5-2.5z" fill="#d6d6d6" stroke="#555"/><circle cx="10" cy="10.5" r="6.5" fill="#444"/><path d="M5.4 15.1a6.5 6.5 0 0 1 9.2-9.2z" fill="#f0d020"/><path d="M14 16l6 5h3v2h-4l-6-5" fill="#e0c020" stroke="#7a6a10" stroke-width="0.6"/><path d="M1 14l8 9M9 14l-8 9" stroke="#d01020" stroke-width="2.4"/></g><g transform="translate(1276,145)"><path d="M1 3q0-2.5 2.5-2.5h12l4 3v13l-3 3h-13q-2.5 0-2.5-2.5z" fill="#d6d6d6" stroke="#555"/><circle cx="10" cy="10.5" r="6.5" fill="#444"/><path d="M5.4 15.1a6.5 6.5 0 0 1 9.2-9.2z" fill="#f0d020"/><path d="M14 16l6 5h3v2h-4l-6-5" fill="#e0c020" stroke="#7a6a10" stroke-width="0.6"/><path d="M1.5 23v-21h21v21" fill="none" stroke="#50c030" stroke-width="2.4"/><path d="M1 13l10-11l12 11l-9 10" fill="none" stroke="#d01020" stroke-width="2.4"/></g><g transform="translate(1309,145)"><path d="M1 3q0-2.5 2.5-2.5h12l4 3v13l-3 3h-13q-2.5 0-2.5-2.5z" fill="#d6d6d6" stroke="#555"/><circle cx="10" cy="10.5" r="6.5" fill="#444"/><path d="M5.4 15.1a6.5 6.5 0 0 1 9.2-9.2z" fill="#f0d020"/><path d="M14 16l6 5h3v2h-4l-6-5" fill="#e0c020" stroke="#7a6a10" stroke-width="0.6"/><path d="M1 13l10-11l12 11l-9 10" fill="none" stroke="#d01020" stroke-width="2.4"/></g><path d="M1355 152l3 3l-3 3M1359 152l3 3l-3 3" fill="none" stroke="#555" stroke-width="1.1"/></svg><div class="t" style="left:6px;top:180px;">Vista combinada</div><svg style="left:0;top:0" width="360" height="200">
<rect x="326.5" y="181.5" width="10" height="10" rx="2" fill="none" stroke="#777"/>
<rect x="329" y="186" width="4" height="3.5" fill="none" stroke="#555" stroke-width="1"/><path d="M330.5 184h4v4" fill="none" stroke="#555"/>
<rect x="340.5" y="181.5" width="10" height="10" rx="2" fill="none" stroke="#777"/>
<path d="M343 184l5.5 5.5M348.5 184l-5.5 5.5" stroke="#444" stroke-width="1.8"/>
</svg><div class="a" style="left:2px;top:223px;width:351px;height:489px;background:#f9f9f9;border:1px solid #c4c4c4;border-left-color:#f4f4f4;border-radius:0 2px 2px 2px"></div><div class="a" style="left:79px;top:198px;width:69px;height:26px;background:#e4e4e4;border:1px solid #c4c4c4;border-bottom:none;border-radius:3px 3px 0 0"></div><div class="t" style="left:91px;top:204px;">Tareas</div><div class="a" style="left:2px;top:196px;width:77px;height:29px;background:#f9f9f9;border:1px solid #c4c4c4;border-bottom:none;border-radius:3px 3px 0 0"></div><div class="t" style="left:14px;top:204px;">Modelo</div><div class="a" style="left:3px;top:224px;width:348px;height:222px;background:#fff;border:1px solid #b9b9b9;box-shadow:inset 0 0 0 1px #e8e8e8"></div><div class="a" style="left:5px;top:226px;width:344px;height:20px;background:#ededed"></div><div class="a" style="left:5px;top:226px;width:292px;height:21px;background:linear-gradient(#fbfbfb,#e9e9e9);border-bottom:1px solid #a4a4a4"></div><div class="a" style="left:196px;top:227px;width:1px;height:19px;background:#d0d0d0"></div><div class="t" style="left:7px;top:230px;">Etiquetas &amp; Atributos</div><div class="t" style="left:200px;top:230px;">Descripción</div><div class="t" style="left:7px;top:249px;">Aplicación</div><div class="a" style="left:4px;top:340px;width:293px;height:19px;background:#308cc6"></div><div class="t" style="left:49px;top:268px;letter-spacing:0.2px"><b>enchufe_inteligente</b></div><div class="t" style="left:69px;top:286px;color:#111;letter-spacing:0.3px">Fusion002</div><div class="t" style="left:69px;top:305px;color:#111;letter-spacing:0.3px">Fillet002</div><div class="t" style="left:69px;top:324px;color:#111;letter-spacing:0.3px">Chamfer</div><div class="t" style="left:69px;top:343px;color:#fff;letter-spacing:0.3px">Fillet003</div><div class="t" style="left:69px;top:362px;color:#111;letter-spacing:0.3px">Cut006</div><svg style="left:0;top:0" width="360" height="400"><path d="M10 270.5h8l-4 4.5z" fill="#606060"/><rect x="28.5" y="266.5" width="13" height="14" rx="1.5" fill="#f4f4f4" stroke="#888"/><path d="M31 272l4-2l4 1.5v6l-4 2l-4-1.5z" fill="#2d64ad"/><circle cx="38.5" cy="270" r="3" fill="#e02030"/><path d="M32 288.5l4.5 4l-4.5 4z" fill="#606060"/><g transform="translate(47,285)"><circle cx="10" cy="5.5" r="5.3" fill="#4a7cc0" stroke="#2a4a80" stroke-width="0.6"/><circle cx="5.5" cy="10" r="5.3" fill="#4a7cc0" stroke="#2a4a80" stroke-width="0.6"/><rect x="5" y="5" width="6" height="6" transform="rotate(45 8 8)" fill="#4a7cc0"/></g><path d="M32 307.5l4.5 4l-4.5 4z" fill="#606060"/><g transform="translate(47,304)"><path d="M1 8q0-6 7-7l7 1q-5 1-6 7v6l-8-1.5z" fill="#4a7cc0" stroke="#2a4a80" stroke-width="0.7"/></g><path d="M32 326.5l4.5 4l-4.5 4z" fill="#606060"/><g transform="translate(47,323)"><path d="M1 11l6-9.5l8 1.5l-6 9v3l-8-1.5z" fill="#4a7cc0" stroke="#2a4a80" stroke-width="0.7"/></g><path d="M32 345.5l4.5 4l-4.5 4z" fill="#1a2a3a"/><g transform="translate(47,342)"><path d="M1 8q0-6 7-7l7 1q-5 1-6 7v6l-8-1.5z" fill="#8aa0b8" stroke="#6a8098" stroke-width="0.7"/></g><path d="M32 364.5l4.5 4l-4.5 4z" fill="#606060"/><g transform="translate(47,361)"><circle cx="5.5" cy="10" r="5.3" fill="#4a7cc0" stroke="#2a4a80" stroke-width="0.6"/><circle cx="10" cy="5.5" r="5.3" fill="#f6f6f6" stroke="#555" stroke-width="0.7"/></g><rect x="170" y="447" width="1" height="1" fill="#aaa"/><rect x="173" y="447" width="1" height="1" fill="#aaa"/><rect x="176" y="447" width="1" height="1" fill="#aaa"/><rect x="179" y="447" width="1" height="1" fill="#aaa"/><rect x="182" y="447" width="1" height="1" fill="#aaa"/><rect x="185" y="447" width="1" height="1" fill="#aaa"/><rect x="356" y="439" width="1" height="1" fill="#aaa"/><rect x="356" y="442" width="1" height="1" fill="#aaa"/><rect x="356" y="445" width="1" height="1" fill="#aaa"/><rect x="356" y="448" width="1" height="1" fill="#aaa"/><rect x="356" y="451" width="1" height="1" fill="#aaa"/><rect x="356" y="454" width="1" height="1" fill="#aaa"/></svg><div class="a" style="left:3px;top:450px;width:348px;height:231px;background:#fff;border:1px solid #b9b9b9;box-shadow:inset 0 0 0 1px #e4e4e4"></div><div class="a" style="left:5px;top:452px;width:345px;height:229px;border:1px solid #c2c2c2"></div><div class="a" style="left:6px;top:453px;width:328px;height:20px;background:linear-gradient(#fbfbfb,#ebebeb)"></div><div class="a" style="left:105px;top:454px;width:1px;height:19px;background:#d8d8d8"></div><div class="t" style="left:8px;top:457px;">Propiedades</div><div class="t" style="left:108px;top:457px;">Valor</div><div class="a" style="left:6px;top:473px;width:328px;height:23px;background:#a0a0a0"></div><div class="t" style="left:29px;top:479px;color:#fff"><b>Base</b></div><div class="a" style="left:6px;top:496px;width:328px;height:22px;background:#f5f5f5;overflow:hidden"></div><div class="a" style="left:26px;top:517px;width:308px;height:1px;background:#dadada"></div><div class="a" style="left:105px;top:496px;width:1px;height:22px;background:#dadada"></div><div class="t" style="left:29px;top:502px;color:#111">Base</div><div class="t" style="left:109px;top:502px;">Common003</div><div class="a" style="left:6px;top:518px;width:328px;height:22px;background:#fff;overflow:hidden"></div><div class="a" style="left:26px;top:539px;width:308px;height:1px;background:#dadada"></div><div class="a" style="left:105px;top:518px;width:1px;height:22px;background:#dadada"></div><div class="t" style="left:29px;top:524px;color:#111">Placement</div><div class="t" style="left:109px;top:524px;letter-spacing:0">[(0,00 0,00 1,00); 0,0000 °; (0,0…</div><div class="a" style="left:6px;top:540px;width:328px;height:22px;background:#f5f5f5;overflow:hidden"></div><div class="a" style="left:46px;top:561px;width:288px;height:1px;background:#dadada"></div><div class="a" style="left:105px;top:540px;width:1px;height:22px;background:#dadada"></div><div class="t" style="left:49px;top:546px;color:#111">Ángulo</div><div class="t" style="left:109px;top:546px;">0,0000 °</div><div class="a" style="left:6px;top:562px;width:328px;height:22px;background:#fff;overflow:hidden"></div><div class="a" style="left:46px;top:583px;width:288px;height:1px;background:#dadada"></div><div class="a" style="left:105px;top:562px;width:1px;height:22px;background:#dadada"></div><div class="t" style="left:49px;top:568px;color:#111">Eje</div><div class="t" style="left:109px;top:568px;">[0,00 0,00 1,00]</div><div class="a" style="left:6px;top:584px;width:328px;height:22px;background:#f5f5f5;overflow:hidden"></div><div class="a" style="left:46px;top:605px;width:288px;height:1px;background:#dadada"></div><div class="a" style="left:105px;top:584px;width:1px;height:22px;background:#dadada"></div><div class="t" style="left:49px;top:590px;color:#111">Posici…</div><div class="t" style="left:109px;top:590px;letter-spacing:0">[0,0000 mm  0,0000 mm  -10,0…</div><div class="a" style="left:6px;top:606px;width:328px;height:22px;background:#fff;overflow:hidden"></div><div class="a" style="left:66px;top:627px;width:268px;height:1px;background:#dadada"></div><div class="a" style="left:105px;top:606px;width:1px;height:22px;background:#dadada"></div><div class="t" style="left:69px;top:612px;color:#111">x</div><div class="t" style="left:109px;top:612px;">0,0000 mm</div><div class="a" style="left:6px;top:628px;width:328px;height:22px;background:#f5f5f5;overflow:hidden"></div><div class="a" style="left:66px;top:649px;width:268px;height:1px;background:#dadada"></div><div class="a" style="left:105px;top:628px;width:1px;height:22px;background:#dadada"></div><div class="t" style="left:69px;top:634px;color:#111">y</div><div class="t" style="left:109px;top:634px;">0,0000 mm</div><div class="a" style="left:6px;top:650px;width:328px;height:22px;background:#fff;overflow:hidden"></div><div class="a" style="left:6px;top:650px;width:99px;height:22px;background:#308cc6"></div><div class="a" style="left:66px;top:671px;width:268px;height:1px;background:#dadada"></div><div class="a" style="left:105px;top:650px;width:1px;height:22px;background:#dadada"></div><div class="t" style="left:69px;top:656px;color:#fff">z</div><div class="t" style="left:109px;top:656px;">-10,0000 mm</div><div class="a" style="left:6px;top:672px;width:328px;height:8px;background:#f5f5f5;overflow:hidden"></div><div class="a" style="left:105px;top:672px;width:1px;height:8px;background:#dadada"></div><div class="a" style="left:5px;top:672px;width:328px;height:8px;overflow:hidden"><div class="t" style="left:24px;top:6px">Label</div><div class="t" style="left:104px;top:6px">Fillet003</div></div><div class="a" style="left:334px;top:453px;width:15px;height:227px;background:linear-gradient(90deg,#f4f4f4,#fcfcfc);border-left:1px solid #d8d8d8"></div><div class="a" style="left:334px;top:466px;width:15px;height:1px;background:#d8d8d8"></div><div class="a" style="left:334px;top:666px;width:15px;height:1px;background:#d8d8d8"></div><div class="a" style="left:336px;top:653px;width:12px;height:13px;background:#e2e2e2;border:1px solid #d0d0d0"></div><svg style="left:0;top:0;z-index:2" width="360" height="700"><path d="M12 527h8l-4 4z" fill="#606060"/><path d="M35 569l4 4l-4 4z" fill="#606060"/><path d="M32 593h8l-4 4z" fill="#606060"/><path d="M336.5 463h8l-4-5z" fill="#505050"/><path d="M336.5 671h8l-4 5z" fill="#505050"/></svg><div class="a" style="left:4px;top:681px;width:59px;height:26px;background:#e4e4e4;border:1px solid #c4c4c4;border-top:none;border-radius:0 0 3px 3px"></div><div class="t" style="left:16px;top:688px;">Vista</div><div class="a" style="left:62px;top:680px;width:64px;height:29px;background:#fdfdfd;border:1px solid #c4c4c4;border-top:none;border-radius:0 0 3px 3px"></div><div class="t" style="left:75px;top:689px;">Datos</div><div class="a" style="left:359px;top:177px;width:1008px;height:503px;background:linear-gradient(#333564,#9596a8)"></div>
<svg style="left:0;top:0;z-index:3" width="1368" height="743">
<defs>
 <linearGradient id="mL" gradientUnits="userSpaceOnUse" x1="724" y1="0" x2="835" y2="0"><stop offset="0" stop-color="#262626"/><stop offset="0.075" stop-color="#6a6a6a"/><stop offset="0.085" stop-color="#767676"/><stop offset="1" stop-color="#939393"/></linearGradient>
 <linearGradient id="mS" gradientUnits="userSpaceOnUse" x1="835" y1="0" x2="891" y2="0"><stop offset="0" stop-color="#9c9c9c"/><stop offset="0.45" stop-color="#b6b6b6"/><stop offset="1" stop-color="#9a9a9a"/></linearGradient>
 <linearGradient id="mR" gradientUnits="userSpaceOnUse" x1="891" y1="0" x2="1002" y2="0"><stop offset="0" stop-color="#959595"/><stop offset="0.9" stop-color="#747474"/><stop offset="0.92" stop-color="#6e6e6e"/><stop offset="1" stop-color="#262626"/></linearGradient>
 <linearGradient id="mW" gradientUnits="userSpaceOnUse" x1="779" y1="0" x2="949" y2="0"><stop offset="0" stop-color="#1e1e1e"/><stop offset="0.04" stop-color="#6a6a6a"/><stop offset="0.07" stop-color="#8a8a8a"/><stop offset="0.33" stop-color="#8c8c8c"/><stop offset="0.34" stop-color="#b0b0b0"/><stop offset="0.62" stop-color="#a8a8a8"/><stop offset="0.8" stop-color="#868686"/><stop offset="0.92" stop-color="#555555"/><stop offset="1" stop-color="#1e1e1e"/></linearGradient>
 <linearGradient id="mC" gradientUnits="userSpaceOnUse" x1="778" y1="0" x2="890" y2="0"><stop offset="0" stop-color="#303030"/><stop offset="0.3" stop-color="#8a8a8a"/><stop offset="0.75" stop-color="#b0b0b0"/><stop offset="1" stop-color="#a0a0a0"/></linearGradient>
 <linearGradient id="mP" gradientUnits="userSpaceOnUse" x1="882" y1="0" x2="903" y2="0"><stop offset="0" stop-color="#5a5a5a"/><stop offset="0.5" stop-color="#c0c0c0"/><stop offset="1" stop-color="#6a6a6a"/></linearGradient>
</defs>
<g stroke="#0a0a0a" stroke-width="1.4" stroke-linejoin="round">
 <!-- bottom parts -->
 <path d="M882.5 548V597Q893 606 903 597V548Z" fill="url(#mP)"/>
 <ellipse cx="831" cy="562" rx="11" ry="5" fill="#b4b4b4"/>
 <path d="M778.3 480V522Q795 550 851.5 562.3L888 560V505Z" fill="url(#mC)"/>
 <path d="M888 515L946.8 482V528L929 534V545L915.5 552L908.6 548.6L888 559Z" fill="#8a8a8a"/>
 <path d="M888 515V559L908.6 548.6V505Z" fill="#9c9c9c"/>
 <path d="M908.6 505V548.6M915.5 500V552M929.2 495V545M943 490V529" fill="none"/>
 <!-- body -->
 <path d="M724.7 290V441Q725 452 733 458L835 516.5Q863 527 891 516.5L993.5 458Q1002 452 1002 441V290Q1000 280 990 275L736.5 273Q726 281 724.7 290Z" fill="url(#mL)"/>
 <path d="M891 300L1002 290V441Q1002 452 993.5 458L891 516.5Z" fill="url(#mR)" stroke="none"/>
 <path d="M724.7 290V441Q725 452 733 458L835 516.5Q863 527 891 516.5L993.5 458Q1002 452 1002 441V290" fill="none"/>
 <path d="M733 300V458M993.5 300V458" fill="none" stroke-width="1.2"/>
 <path d="M835 368V516.5Q863 527 891 516.5V368Z" fill="url(#mS)"/>
 <path d="M835 507Q863 517 891 507" fill="none" stroke-width="1.2"/>
 <!-- ledge (body top band) -->
 <path d="M724.7 290V298Q726 306 735 311L800 350Q840 373 863 373Q886 373 926 350L992.9 309.5Q1001 304 1002 296V290Q1000 280 990 275L736.5 273Q726 281 724.7 290Z" fill="#858585"/>
 <!-- lip -->
 <path d="M736.5 272V292Q737 301 744 306L812 347Q844 366 863 366Q882 366 914 347L981 306Q989 302 989 293V276Q988 284 981 288L914 328Q882 347 863 347Q844 347 812 328L743 287Q736 282 736.5 272Z" fill="url(#mL)"/>
 <path d="M885 340L981 287Q989 283 989 276V293Q989 302 981 306L885 359Z" fill="url(#mR)" stroke="none"/>
 <path d="M989 276V293Q989 302 981 306L914 347Q882 366 863 366Q844 366 812 347L744 306Q737 301 736.5 292V272" fill="none"/>
 <path d="M841 342V361.5Q863 368 885 361.5V342Q863 349 841 342Z" fill="url(#mS)"/>
 <path d="M744 287V306M981 289V307" fill="none" stroke-width="1.2"/>
 <!-- top face -->
 <path d="M744 259L812 217Q850 199 866 199Q882 199 910 215L973 252Q989 261 989 276Q988 284 981 288L914 328Q882 347 863 347Q844 347 812 328L743 287Q736 282 736.5 272Q737 263 744 259Z" fill="#878787"/>
 <!-- hole opening: wall -->
 <path d="M803 246.5L797 242.5L810 236L818 238.5L836 227Q870 218 905 230Q940 245 947 270Q948 283 940 290L923 299.5L892 288.5L875 285.3L854 285.3L837 288.5L817 299.8L803 303Q782 290 779 271Q780 259 803 246.5Z" fill="url(#mW)"/>
 <!-- floor -->
 <path d="M803 303L817 299.8L837 288.5L854 285.3L875 285.3L892 288.5L923 300L929 306L922.7 307.7L916 312L909 307Q890 320 878 322L848 322Q815 315 803 303Z" fill="#858585"/>
 <path d="M803 246.5V303M810 236V300M818 238.5V299M836.5 229V288.5" fill="none" stroke-width="1.2"/>
 <path d="M823 315Q825 309 833 309Q841 309 843 316Q842 320 835 320Q825 320 823 315Z" fill="#b0b0b0" stroke-width="1.1"/>
</g>
</svg>
<svg style="left:0;top:0;z-index:4" width="1368" height="743">
 <g fill="#9c9cbc">
  <path d="M1283 196L1294.8 184L1306.6 196Z"/>
  <path d="M1240 239V261.5L1229 250.2Z"/>
  <path d="M1348.6 238.5V261.5L1360.5 250Z"/>
  <path d="M1283 303.5H1306.6L1294.8 315.5Z"/>
  <path d="M1276 192L1278 199Q1262 204 1254 213L1257 218L1245 219L1247 207L1250 210Q1260 198 1276 192Z"/>
  <path d="M1312 192L1310 199Q1326 204 1334 213L1331 218L1343 219L1341 207L1338 210Q1328 198 1312 192Z"/>
 </g>
 <path d="M1287.8 214.6H1300.3L1329 227L1332.4 237.5L1324.4 268.4L1302.6 289H1285.5L1266 269.5L1255.1 237.5L1258 229.5Z" fill="#a2a2c2"/>
 <path d="M1264.9 224.9L1287.8 216.9H1300.3L1323.2 226L1298 240.9H1291.2Z" fill="#cfcfe2"/>
 <path d="M1258 236.9L1285.5 247.8L1288.9 287.8L1266 269.5Z" fill="#cfcfe2"/>
 <path d="M1302.6 247.8L1330 236.3L1324.4 268.4L1300.3 287.8Z" fill="#cfcfe2"/>
 <path d="M1294 217V241" stroke="#a4a4c4" stroke-width="1.5"/>
 <circle cx="1294" cy="249.5" r="8.6" fill="#c6c6da" stroke="#b2b2cc" stroke-width="1"/>
 <path d="M1294 241V249.5M1285.5 253.5l8.5-4l8.5 4" stroke="#a8a8c4" stroke-width="1" fill="none"/>
 <g fill="#0a0a0a" font-size="7" font-weight="bold" style="font-family:Liberation Sans">
  <text x="0" y="0" transform="translate(1262,259) rotate(33)">FRONT</text>
  <text x="0" y="0" transform="translate(1304,273) rotate(-35)">RIGHT</text>
  <text x="0" y="0" transform="translate(1285,229) rotate(4)">TOP</text>
 </g>
 <path d="M1257 270L1249.5 238" stroke="#1010f0" stroke-width="1.5"/>
 <path d="M1257 270L1282 293" stroke="#f01010" stroke-width="1.5"/>
 <path d="M1257 270L1286 254" stroke="#90f090" stroke-width="1.3"/>
 <text x="1249" y="225" font-size="9" fill="#1a1af0" style="font-family:Liberation Sans">Z</text>
 <text x="1295" y="304" font-size="9" fill="#e01010" style="font-family:Liberation Sans">X</text>
 <text x="1296" y="251" font-size="9" fill="#a0e8a0" style="font-family:Liberation Sans">Y</text>
 <path d="M1317 295L1330 291.5L1337 294V307L1324 310.5L1317 308Z" fill="#8e8eac"/>
 <path d="M1317 295L1324 297.5L1337 294M1324 297.5V310.5" stroke="#a6a6c2" stroke-width="0.8" fill="none"/>
 <path d="M1341 297.5H1353L1347 304.5Z" fill="#5c5c80"/>
</svg>
<div class="a" style="left:359px;top:680px;width:1008px;height:1px;background:#e8e8e8"></div>
<div class="a" style="left:359px;top:681px;width:175px;height:27px;background:#e2e2e2;border:1px solid #c4c4c4;border-top:none;border-radius:0 0 3px 3px"></div>
<div class="a" style="left:533px;top:680px;width:225px;height:30px;background:#f9f9f9;border:1px solid #c4c4c4;border-top:none;border-radius:0 0 3px 3px"></div>
<div class="t" style="left:391px;top:689px;letter-spacing:0.15px">Página de inicio</div>
<div class="t" style="left:565px;top:690px;letter-spacing:0.35px">enchufe_inteligente : 1</div>
<svg style="left:0;top:0" width="1368" height="743">
 <g transform="translate(371,686)">
  <path d="M0.5 0.5h8v3h-4.5v3h4v3h-4v6h-3.5z" fill="#d8101c" stroke="#8a0a10" stroke-width="0.6"/>
  <circle cx="11" cy="10" r="4" fill="#4a78b8"/><circle cx="11" cy="10" r="1.5" fill="#dfe8f5"/>
  <path d="M11 5v10M6 10h10M7.5 6.5l7 7M14.5 6.5l-7 7" stroke="#4a78b8" stroke-width="1.6"/>
 </g>
 <circle cx="510" cy="695.5" r="8" fill="#d0182c"/><path d="M507 692.5l6 6M513 692.5l-6 6" stroke="#fff" stroke-width="1.8"/>
 <g transform="translate(545,687)">
  <path d="M0.5 0.5h8v3h-4.5v3h4v3h-4v6h-3.5z" fill="#d8101c" stroke="#8a0a10" stroke-width="0.6"/>
  <circle cx="11" cy="10" r="4" fill="#4a78b8"/><circle cx="11" cy="10" r="1.5" fill="#dfe8f5"/>
  <path d="M11 5v10M6 10h10M7.5 6.5l7 7M14.5 6.5l-7 7" stroke="#4a78b8" stroke-width="1.6"/>
 </g>
 <circle cx="735" cy="696" r="8" fill="#d0182c"/><path d="M732 693l6 6M738 693l-6 6" stroke="#fff" stroke-width="1.8"/>
 <!-- status -->
 <rect x="1133.5" y="720.5" width="8" height="13" rx="4" fill="none" stroke="#333" stroke-width="1.3"/><path d="M1137.5 723v3" stroke="#333" stroke-width="1.3"/>
 <path d="M1184 727h6l-3 3.5z" fill="#777"/>
 <!-- axis -->
 <path d="M1342 655v-16" stroke="#1a1aa0" stroke-width="2"/><path d="M1342 655l9-5" stroke="#1a8a1a" stroke-width="2"/><path d="M1342 655l14 8" stroke="#a01a1a" stroke-width="2"/>
 <text x="1344" y="640" font-size="10" fill="#111" style="font-family:Liberation Sans">Z</text>
 <text x="1354" y="649" font-size="10" fill="#111" style="font-family:Liberation Sans">Y</text>
 <text x="1358" y="664" font-size="10" fill="#111" style="font-family:Liberation Sans">X</text>
</svg>
<div class="t" style="left:1147px;top:721px;letter-spacing:0.3px">CAD</div>
<div class="t" style="left:1201px;top:721px;letter-spacing:0.05px">215,47 mm x 107,52 mm</div>

</body></html>
